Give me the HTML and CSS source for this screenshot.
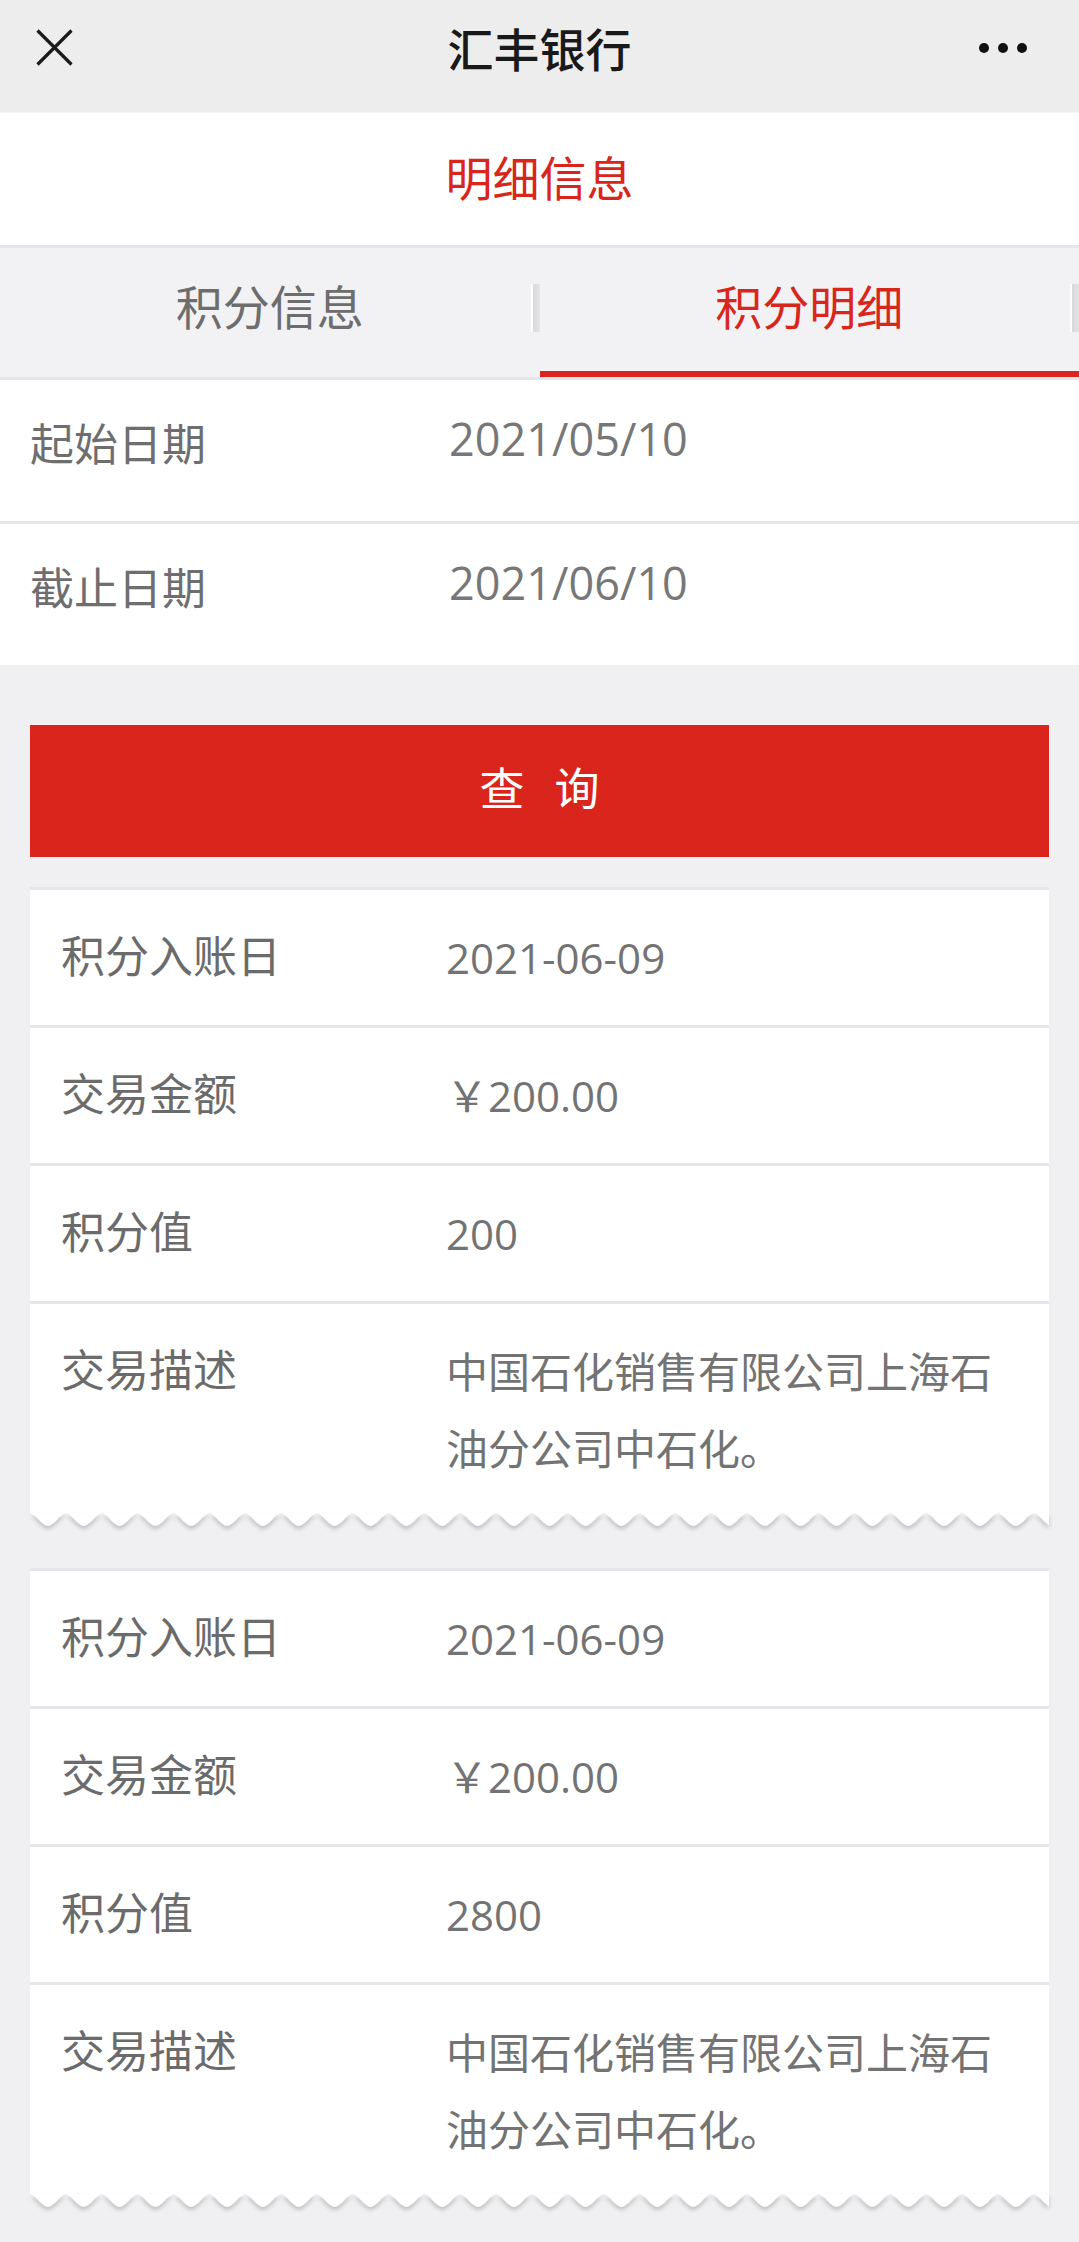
FILE: index.html
```html
<!DOCTYPE html>
<html lang="zh-CN">
<head>
<meta charset="utf-8">
<title>汇丰银行</title>
<link rel="stylesheet" href="styles.css">
</head>
<body>
<div class="page">
  <header class="navbar">
    <div class="nav-left">
      <svg class="icon-close" width="37" height="37" viewBox="0 0 37 37"><path d="M1.5 1.5L35.5 35.5M35.5 1.5L1.5 35.5" stroke="#1a1a1a" stroke-width="3.2" fill="none"/></svg>
    </div>
    <div class="nav-title">汇丰银行</div>
    <div class="nav-right">
      <svg class="icon-more" width="50" height="12" viewBox="0 0 50 12"><circle cx="5" cy="6" r="5" fill="#111"/><circle cx="24" cy="6" r="5" fill="#111"/><circle cx="43" cy="6" r="5" fill="#111"/></svg>
    </div>
  </header>

  <div class="section-title">明细信息</div>

  <nav class="tabs">
    <div class="tab">积分信息</div>
    <div class="tab active">积分明细</div>
  </nav>

  <div class="date-list">
    <div class="date-row"><span class="date-label">起始日期</span><span class="date-value">2021/05/10</span></div>
    <div class="date-row"><span class="date-label">截止日期</span><span class="date-value">2021/06/10</span></div>
  </div>

  <div class="query-btn"><span class="query-text">查询</span></div>

  <div class="cards">
    <div class="card">
      <div class="card-row"><span class="card-label">积分入账日</span><span class="card-value">2021-06-09</span></div>
      <div class="card-row"><span class="card-label">交易金额</span><span class="card-value">￥200.00</span></div>
      <div class="card-row"><span class="card-label">积分值</span><span class="card-value">200</span></div>
      <div class="card-row desc"><span class="card-label">交易描述</span><span class="card-value">中国石化销售有限公司上海石油分公司中石化。</span></div>
      <svg class="zigzag" width="1019" height="20" viewBox="0 0 1019 20">
        <defs><pattern id="zz1" width="35.85" height="20" patternUnits="userSpaceOnUse"><path d="M0 0C5.5 1 12 13 17.9 13C23.8 13 30.3 1 35.85 0Z" fill="#fff"/></pattern></defs>
        <rect x="0" y="0" width="1019" height="20" fill="url(#zz1)"/>
      </svg>
    </div>
    <div class="card">
      <div class="card-row"><span class="card-label">积分入账日</span><span class="card-value">2021-06-09</span></div>
      <div class="card-row"><span class="card-label">交易金额</span><span class="card-value">￥200.00</span></div>
      <div class="card-row"><span class="card-label">积分值</span><span class="card-value">2800</span></div>
      <div class="card-row desc"><span class="card-label">交易描述</span><span class="card-value">中国石化销售有限公司上海石油分公司中石化。</span></div>
      <svg class="zigzag" width="1019" height="20" viewBox="0 0 1019 20">
        <defs><pattern id="zz2" width="35.85" height="20" patternUnits="userSpaceOnUse"><path d="M0 0C5.5 1 12 13 17.9 13C23.8 13 30.3 1 35.85 0Z" fill="#fff"/></pattern></defs>
        <rect x="0" y="0" width="1019" height="20" fill="url(#zz2)"/>
      </svg>
    </div>
  </div>
</div>
</body>
</html>
```
FILE: styles.css
```css
* {
  box-sizing: border-box;
  margin: 0;
  padding: 0;
}

html, body {
  background: #f0f0f2;
}

body {
  margin: 0;
  font-family: "Noto Sans CJK SC", "Noto Sans", sans-serif;
}

.page {
  width: 1079px;
  min-height: 2242px;
  background: #f0f0f2;
}

/* top navigation */
.navbar {
  display: grid;
  grid-template-columns: 1fr auto 1fr;
  align-items: center;
  height: 113px;
  padding-bottom: 17px;
  background: #ededed;
  border-bottom: 1px solid #f4f4f4;
}

.nav-left {
  display: flex;
  padding-left: 36px;
}

.icon-close,
.icon-more {
  display: block;
}

.nav-title {
  font-size: 46px;
  font-weight: 500;
  color: #191919;
  line-height: 1.2;
}

.nav-right {
  display: flex;
  justify-content: flex-end;
  padding-right: 50px;
}

/* section title */
.section-title {
  height: 135px;
  display: flex;
  align-items: center;
  justify-content: center;
  padding-bottom: 7px;
  background: #fff;
  border-bottom: 3px solid #e5e5ea;
  font-size: 47px;
  color: #d9261c;
}

/* tabs */
.tabs {
  display: flex;
  height: 132px;
  background: #f2f2f4;
  border-bottom: 3px solid #e5e5ea;
}

.tab {
  flex: 1;
  position: relative;
  display: flex;
  align-items: center;
  justify-content: center;
  padding-bottom: 17px;
  font-size: 47px;
  color: #6d6d6d;
}

.tab::after {
  content: "";
  position: absolute;
  right: 0;
  top: 36px;
  width: 9px;
  height: 48px;
  background: linear-gradient(to right, #ffffff 0, #ffffff 2px, #d9d9db 2px, #e4e4e6 100%);
}

.tab.active {
  color: #d9261c;
}

.tab.active::before {
  content: "";
  position: absolute;
  left: 0;
  right: 0;
  bottom: 0;
  height: 6px;
  background: #da251d;
}

/* date filters */
.date-list {
  background: #fff;
}

.date-row {
  display: grid;
  grid-template-columns: 419px 1fr;
  align-items: start;
  height: 141px;
  padding: 36px 0 0 30px;
}

.date-row + .date-row {
  height: 144px;
  border-top: 3px solid #e5e5ea;
}

.date-label {
  font-size: 44px;
  line-height: 44px;
  padding-top: 4px;
  color: #6e6e6e;
}

.date-value {
  font-family: "Open Sans", "Noto Sans CJK SC", sans-serif;
  font-size: 45px;
  line-height: 45px;
  color: #777;
}

/* query button */
.query-btn {
  margin: 60px 30px 0;
  height: 132px;
  display: flex;
  align-items: center;
  justify-content: center;
  padding-bottom: 9px;
  background: #da251d;
  color: #fff;
  font-size: 45px;
}

.query-text {
  letter-spacing: 30px;
  padding-left: 30px;
}

/* record cards */
.cards {
  padding: 30px 30px 0;
}

.card {
  border-top: 3px solid #e5e5ea;
  margin-bottom: 35px;
}

.card-row {
  display: grid;
  grid-template-columns: 385px 1fr;
  align-items: start;
  padding: 29px 40px 29px 31px;
  background: #fff;
}

.card-row + .card-row {
  border-top: 3px solid #e5e5ea;
}

.card-row.desc {
  padding-bottom: 26px;
}

.card-label {
  font-size: 44px;
  line-height: 71px;
  color: #6b6b6b;
}

.card-value {
  font-family: "Open Sans", "Noto Sans CJK SC", sans-serif;
  font-size: 42px;
  line-height: 77px;
  color: #737373;
}

.zigzag {
  display: block;
  width: 1019px;
  height: 20px;
  filter: drop-shadow(0 3px 2px rgba(0, 0, 0, 0.2));
}
```
